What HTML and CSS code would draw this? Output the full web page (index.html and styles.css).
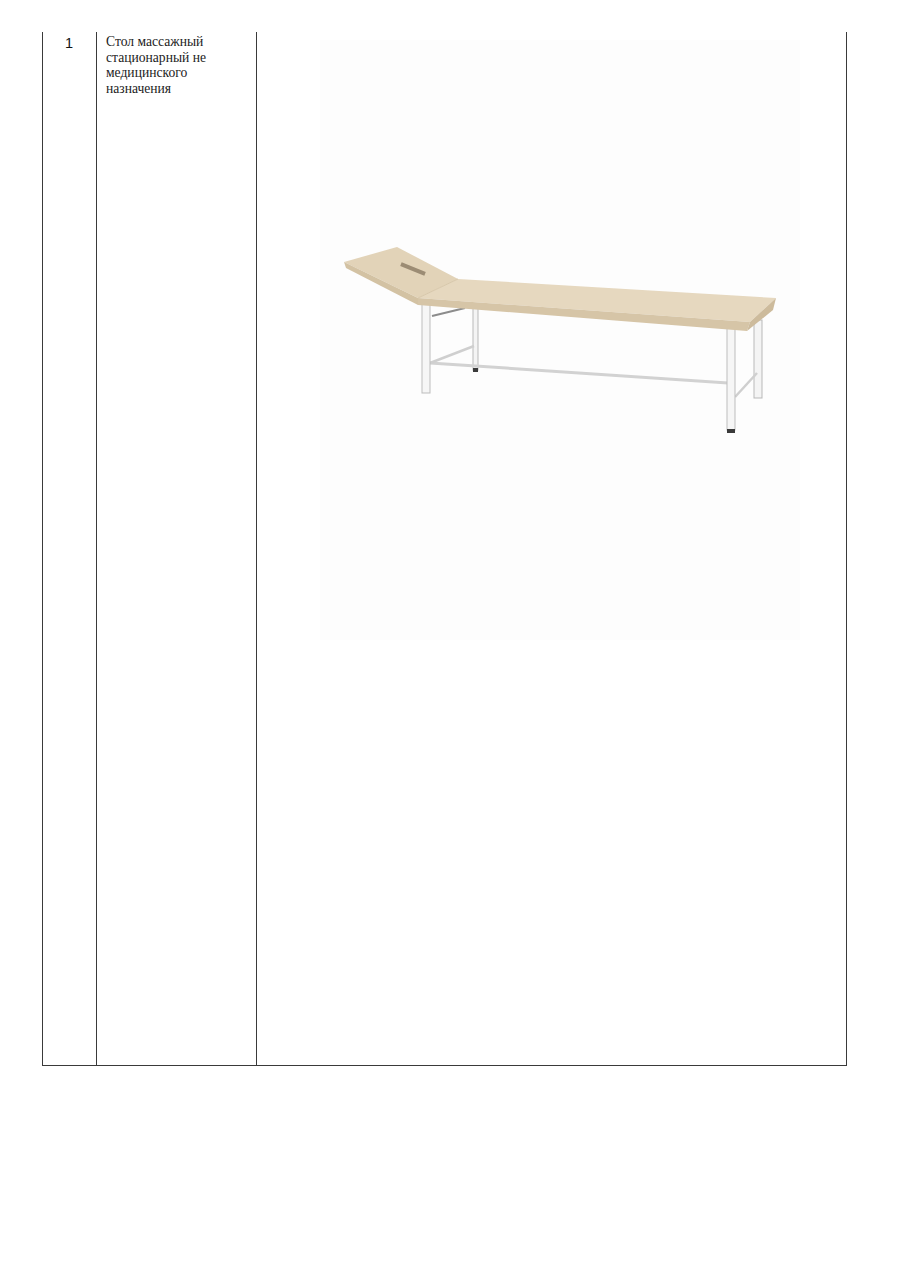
FILE: index.html
```html
<!DOCTYPE html>
<html lang="ru">
<head>
<meta charset="utf-8">
<title>Стол массажный</title>
<link rel="stylesheet" href="styles.css">
</head>
<body>
<div class="sheet">
  <div class="table">
    <div class="cell num">1</div>
    <div class="cell name">Стол массажный стационарный не медицинского назначения</div>
    <div class="cell pic">
      <div class="photo">
        <svg width="480" height="600" viewBox="0 0 480 600" xmlns="http://www.w3.org/2000/svg">
          <!-- back legs -->
          <rect x="153" y="266" width="5" height="64" fill="#f4f4f4" stroke="#b9b9b9" stroke-width="1"/>
          <rect x="153" y="328" width="5" height="4" fill="#3a3a3a"/>
          <rect x="434" y="280" width="8" height="78" fill="#f4f4f4" stroke="#b9b9b9" stroke-width="1"/>
          <!-- braces -->
          <line x1="110" y1="323" x2="408" y2="343" stroke="#d2d2d2" stroke-width="3"/>
          <line x1="110" y1="323" x2="154" y2="306" stroke="#cfcfcf" stroke-width="2.5"/>
          <line x1="415" y1="357" x2="437" y2="333" stroke="#cfcfcf" stroke-width="2.5"/>
          <line x1="112" y1="276" x2="145" y2="268" stroke="#8c8c8c" stroke-width="2"/>
          <!-- front legs -->
          <rect x="102" y="262" width="8" height="91" fill="#f6f6f6" stroke="#bdbdbd" stroke-width="1"/>
          <rect x="407" y="288" width="8" height="102" fill="#f6f6f6" stroke="#bdbdbd" stroke-width="1"/>
          <rect x="407" y="389" width="8" height="4" fill="#3a3a3a"/>
          <!-- headrest -->
          <polygon points="24,222 77,207 138,239 98,258" fill="#e2d3b8"/>
          <polygon points="24,222 98,258 98,265 26,228" fill="#d3c2a3"/>
          <rect x="80" y="227" width="26" height="4" fill="#9c8c74" transform="rotate(22 93 229)"/>
          <!-- main top -->
          <polygon points="138,239 456,258 430,282 98,258" fill="#e6d8bf"/>
          <polygon points="98,258 430,282 427,291 98,265" fill="#d6c5a7"/>
          <polygon points="456,258 430,282 427,291 453,270" fill="#cdbb9c"/>
          <line x1="98" y1="258" x2="138" y2="239" stroke="#d8c8ab" stroke-width="1"/>
        </svg>
      </div>
    </div>
  </div>
</div>
</body>
</html>
```

FILE: styles.css
```css
html, body {
  margin: 0;
  padding: 0;
  background: #ffffff;
}

.sheet {
  width: 900px;
  height: 1273px;
  padding: 32px 0 0 42px;
  box-sizing: border-box;
}

.table {
  display: grid;
  grid-template-columns: 54px 160px 590px;
  height: 1034px;
  border-left: 1px solid #3a3a3a;
  border-bottom: 1px solid #3a3a3a;
  box-sizing: border-box;
  width: 805px;
}

.cell {
  border-right: 1px solid #3a3a3a;
  box-sizing: border-box;
}

.num {
  font-family: "Liberation Sans", Arial, sans-serif;
  font-size: 14.5px;
  line-height: 18px;
  color: #111;
  text-align: center;
  padding-top: 2px;
  padding-right: 1px;
}

.name {
  font-family: "Liberation Serif", "Times New Roman", serif;
  font-size: 13.6px;
  line-height: 15.6px;
  color: #222;
  padding: 2px 20px 0 9px;
}

.pic {
  padding: 8px 0 0 63px;
}

.photo {
  width: 480px;
  height: 600px;
  background: #fdfdfd;
}

.photo svg {
  display: block;
}
```
